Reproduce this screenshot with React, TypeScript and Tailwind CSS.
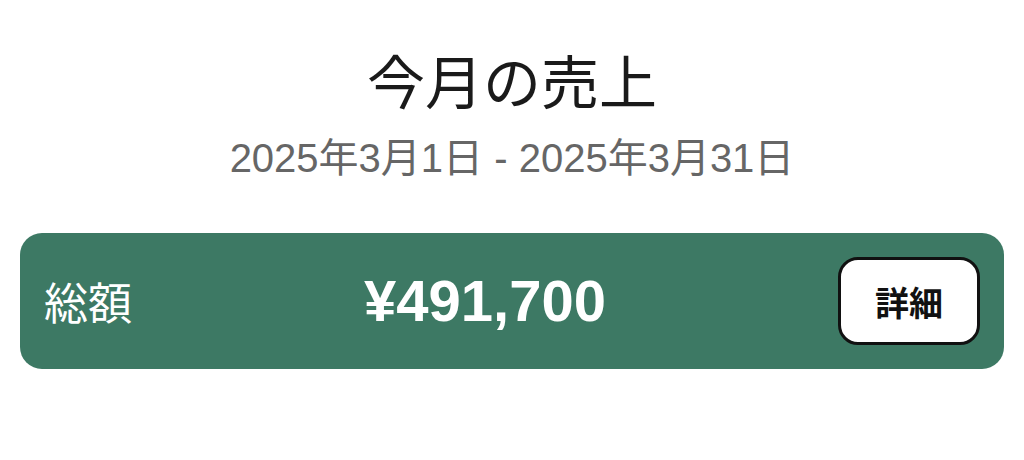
export default function App() {
  return (
    <div className="w-[1024px] h-[460px] bg-white flex flex-col items-center pt-[47px] px-5 font-['Liberation_Sans','Noto_Sans_CJK_JP',sans-serif]">
      <h1 className="text-[58px] leading-[64px] text-[#1a1a1a] font-['Noto_Sans_CJK_JP',sans-serif] font-normal">今月の売上</h1>
      <p className="mt-[23px] text-[40px] leading-[48px] text-[#666666]">2025年3月1日 - 2025年3月31日</p>
      <div className="mt-[51px] w-full bg-[#3d7964] rounded-[22px] px-6 py-6 flex items-center justify-between">
        <span className="text-[44px] leading-none text-white font-['Noto_Sans_CJK_JP',sans-serif]">総額</span>
        <span className="text-[58px] leading-none font-bold text-white">¥491,700</span>
        <button className="w-[142px] h-[88px] bg-white border-[3px] border-[#111] rounded-[20px] flex items-center justify-center text-[34px] font-bold text-[#111] font-['Noto_Sans_CJK_JP',sans-serif]">
          詳細
        </button>
      </div>
    </div>
  );
}
